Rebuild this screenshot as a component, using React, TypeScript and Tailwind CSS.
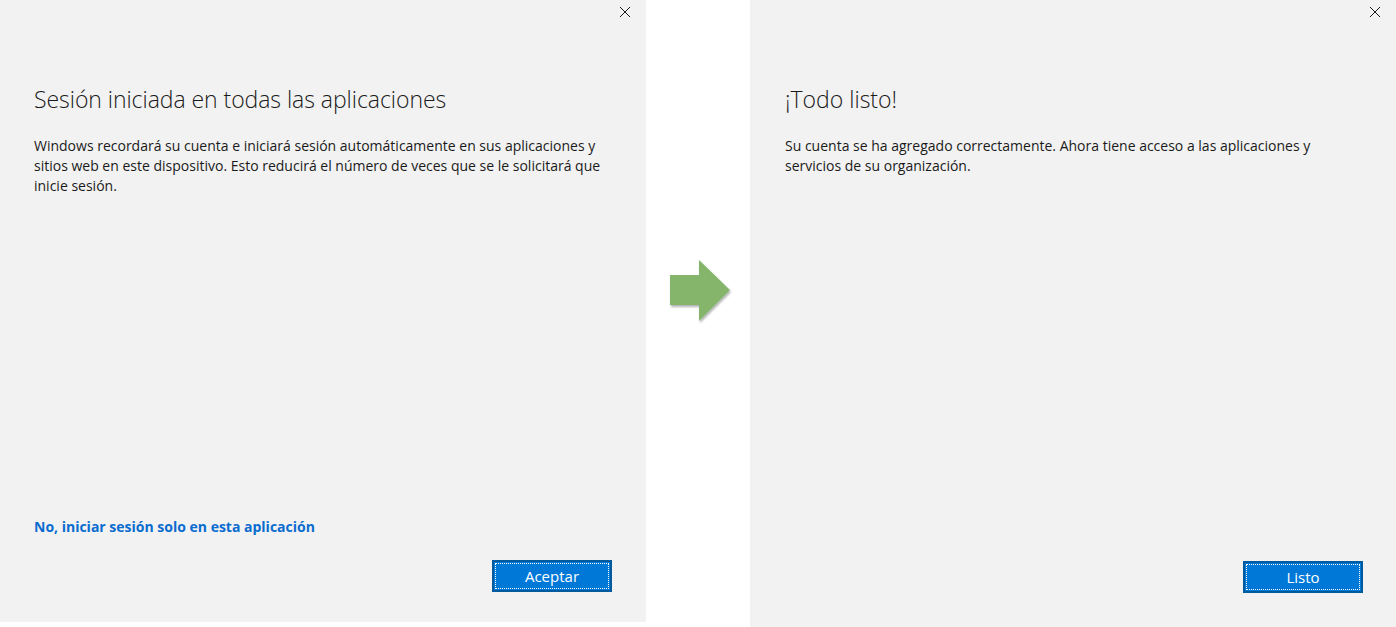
const font = { fontFamily: "'Open Sans', 'Noto Sans', sans-serif" };

function CloseButton() {
  return (
    <button className="absolute top-[6px] right-[15px]">
      <svg width="12" height="12" viewBox="0 0 12 12">
        <path d="M1 1 L11 11 M11 1 L1 11" stroke="#1a1a1a" strokeWidth="1" fill="none" />
      </svg>
    </button>
  );
}

function PrimaryButton({ label }: { label: string }) {
  return (
    <button className="w-[120px] h-[32px] bg-[#0078d7] border-2 border-[#005a9e] p-[1px]">
      <span className="flex items-center justify-center w-full h-full border border-dotted border-white text-white text-[15px] leading-none">
        {label}
      </span>
    </button>
  );
}

export default function App() {
  return (
    <div className="flex w-[1396px] h-[627px] bg-white overflow-hidden" style={font}>
      {/* left dialog */}
      <div className="relative w-[646px] h-[622px] bg-[#f2f2f2] flex flex-col pl-[34px] pr-[34px] pt-[84px] pb-[30px]">
        <CloseButton />
        <h1 className="text-[23px] font-light text-[#1a1a1a] leading-[30px] tracking-[-0.05px]">
          Sesión iniciada en todas las aplicaciones
        </h1>
        <p className="mt-[22px] text-[14px] leading-[20px] text-[#1a1a1a] w-[575px]">
          Windows recordará su cuenta e iniciará sesión automáticamente en sus aplicaciones y sitios web en este dispositivo. Esto reducirá el número de veces que se le solicitará que inicie sesión.
        </p>
        <div className="flex-1" />
        <a className="text-[14px] font-bold text-[#0a6ccf] leading-[20px]">
          No, iniciar sesión solo en esta aplicación
        </a>
        <div className="flex justify-end mt-[23px]">
          <PrimaryButton label="Aceptar" />
        </div>
      </div>

      {/* arrow */}
      <div className="w-[104px] flex items-center pl-[22px]">
        <svg width="66" height="66" viewBox="0 0 66 66" className="mt-[-44px]">
          <defs>
            <filter id="sh" x="-20%" y="-20%" width="140%" height="140%">
              <feDropShadow dx="1" dy="2" stdDeviation="1.2" floodColor="#000" floodOpacity="0.3" />
            </filter>
          </defs>
          <path d="M2 16 L31 16 L31 1 L62 31 L31 62 L31 46 L2 46 Z" fill="#84b56a" filter="url(#sh)" />
        </svg>
      </div>

      {/* right dialog */}
      <div className="relative flex-1 h-[627px] bg-[#f2f2f2] flex flex-col pl-[35px] pr-[33px] pt-[84px] pb-[34px]">
        <CloseButton />
        <h1 className="text-[23px] font-light text-[#1a1a1a] leading-[30px]">¡Todo listo!</h1>
        <p className="mt-[22px] text-[14px] leading-[20px] text-[#1a1a1a] w-[560px]">
          Su cuenta se ha agregado correctamente. Ahora tiene acceso a las aplicaciones y servicios de su organización.
        </p>
        <div className="flex-1" />
        <div className="flex justify-end">
          <PrimaryButton label="Listo" />
        </div>
      </div>
    </div>
  );
}
